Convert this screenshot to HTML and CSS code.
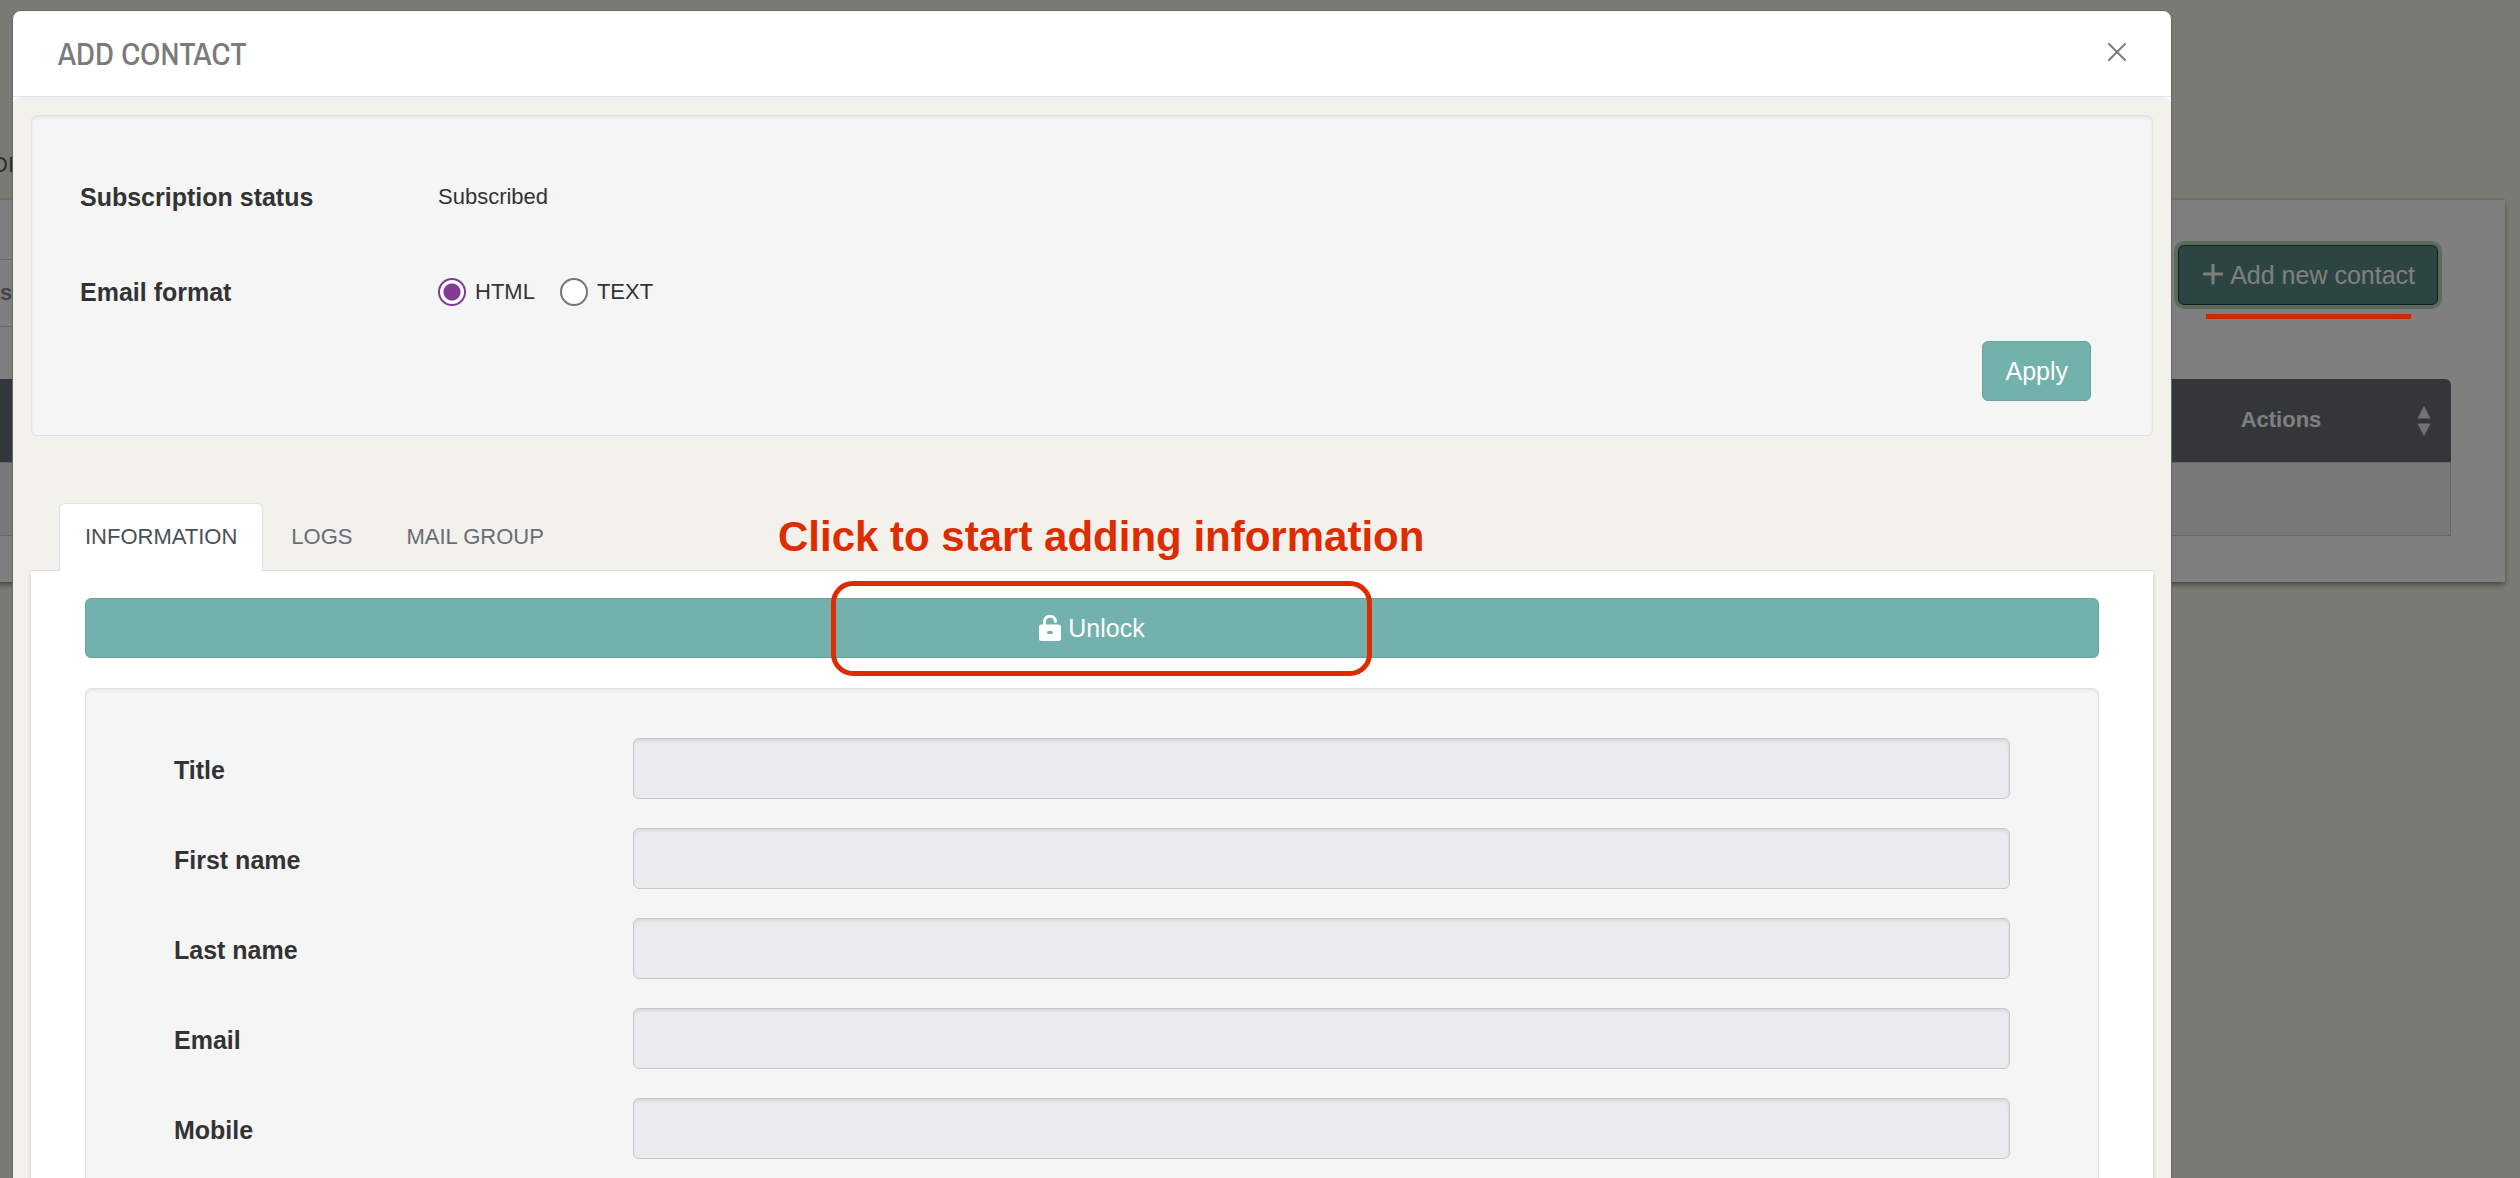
FILE: index.html
```
<!DOCTYPE html>
<html lang="en">
<head>
    <meta charset="UTF-8">
    <meta name="viewport" content="width=device-width, initial-scale=1.0">
    <title>Add Contact</title>
    <link rel="stylesheet" href="styles.css">
</head>
<body>
    <!-- Contacts page behind the modal -->
    <main class="page">
        <div class="page-tabs">DI</div>
        <div class="card">
            <div class="search-row">se</div>
            <div class="card-actions">
                <button type="button" class="btn btn-add">
                    <svg width="20" height="22" viewBox="0 0 20 22"><path d="M10 1v18M1 10h18" stroke="currentColor" stroke-width="3" stroke-linecap="round"/></svg>
                    Add new contact
                </button>
            </div>
            <table class="contacts">
                <thead>
                    <tr>
                        <th></th>
                        <th class="col-actions">
                            Actions
                            <svg class="sort" width="14" height="30" viewBox="0 0 14 30"><path d="M7 0l6.500 12.500h-13zM7 30l6.500-12.500h-13z" fill="currentColor"/></svg>
                        </th>
                    </tr>
                </thead>
                <tbody>
                    <tr>
                        <td colspan="2"></td>
                    </tr>
                </tbody>
            </table>
        </div>
    </main>

    <div class="backdrop">
        <div class="underline"></div>
        <div class="modal" role="dialog" aria-labelledby="modal-title">
            <header class="modal-header">
                <h1 id="modal-title">ADD CONTACT</h1>
                <button type="button" class="close" aria-label="Close">
                    <svg width="18" height="18" viewBox="0 0 18 18"><path d="M1 1l16 16M17 1L1 17" stroke="currentColor" stroke-width="2" stroke-linecap="round"/></svg>
                </button>
            </header>
            <div class="modal-body">
                <form class="well status-form">
                    <div class="status-row">
                        <span class="label">Subscription status</span>
                        <span class="value">Subscribed</span>
                    </div>
                    <div class="status-row">
                        <span class="label" id="format-label">Email format</span>
                        <div class="radios" role="radiogroup" aria-labelledby="format-label">
                            <label><input type="radio" name="format" checked>HTML</label>
                            <label><input type="radio" name="format">TEXT</label>
                        </div>
                    </div>
                    <button type="button" class="btn btn-apply">Apply</button>
                </form>

                <nav class="tabs">
                    <a href="#information" class="tab active">INFORMATION</a>
                    <a href="#logs" class="tab">LOGS</a>
                    <a href="#mail-group" class="tab">MAIL GROUP</a>
                    <p class="hint">Click to start adding information</p>
                </nav>

                <section class="pane" id="information">
                    <div class="unlock-wrap">
                        <button type="button" class="btn btn-unlock">
                            <svg width="22" height="26" viewBox="0 0 22 26">
                                <path d="M5.500 11V7a5.500 5.500 0 0 1 11-.6" fill="none" stroke="currentColor" stroke-width="3" stroke-linecap="round"/>
                                <path fill-rule="evenodd" d="M2.500 9.500h17a2.500 2.500 0 0 1 2.500 2.500v11.500a2.500 2.500 0 0 1-2.500 2.500h-17A2.500 2.500 0 0 1 0 23.500V12a2.500 2.500 0 0 1 2.500-2.500zM9.500 16a1.500 1.500 0 0 0 0 3h3a1.500 1.500 0 0 0 0-3z" fill="currentColor"/>
                            </svg>
                            Unlock
                        </button>
                        <div class="highlight"></div>
                    </div>
                    <form class="well contact-form">
                        <div class="field">
                            <label class="label" for="title">Title</label>
                            <input type="text" id="title" disabled>
                        </div>
                        <div class="field">
                            <label class="label" for="first-name">First name</label>
                            <input type="text" id="first-name" disabled>
                        </div>
                        <div class="field">
                            <label class="label" for="last-name">Last name</label>
                            <input type="text" id="last-name" disabled>
                        </div>
                        <div class="field">
                            <label class="label" for="email">Email</label>
                            <input type="text" id="email" disabled>
                        </div>
                        <div class="field">
                            <label class="label" for="mobile">Mobile</label>
                            <input type="text" id="mobile" disabled>
                        </div>
                    </form>
                </section>
            </div>
        </div>
    </div>
</body>
</html>
```

FILE: styles.css
```
* {
    box-sizing: border-box;
}

body {
    margin: 0;
    min-height: 100vh;
    background: #f4f4eb;
    color: #333;
    font-family: "Liberation Sans", Arial, sans-serif;
    font-size: 22px;
    line-height: 36px;
}

h1, p {
    margin: 0;
}

.btn {
    display: inline-flex;
    align-items: center;
    justify-content: center;
    gap: 7px;
    padding: 11px 22px;
    border: 1px solid #68a29d;
    border-radius: 6px;
    background: #73b1ac;
    color: #fff;
    font-family: inherit;
    font-size: 25px;
    line-height: 36px;
    cursor: pointer;
}

/* Page behind the modal */
.page {
    margin: 0 15px 0 -8px;
    padding-top: 147px;
}

.page-tabs {
    height: 52px;
    color: #4f5660;
}

.card {
    padding: 0 54px 46px 0;
    border-top: 1px solid #dcdcd8;
    background: #fff;
    box-shadow: 0 3px 5px rgba(0, 0, 0, 0.4);
}

.search-row {
    position: absolute;
    left: 0;
    top: 259px;
    width: 600px;
    padding: 15px 0;
    border-top: 1px solid #ccc;
    border-bottom: 1px solid #ccc;
    color: #8a8a8a;
    font-weight: bold;
}

.card-actions {
    display: flex;
    justify-content: flex-end;
    padding: 45px 13px 74px;
}

.btn-add {
    border-color: #243e3c;
    background: #5a8a84;
    box-shadow: 0 0 0 4px #b2d6ba;
}

.btn-add svg {
    margin-left: 2px;
}

.contacts {
    width: 100%;
    border-collapse: separate;
    border-spacing: 0;
}

.contacts th {
    position: relative;
    height: 83px;
    padding: 0 0 2px;
    background: #676d77;
    color: #fff;
}

.contacts th.col-actions {
    width: 340px;
    border-radius: 0 6px 0 0;
}

.sort {
    position: absolute;
    right: 20px;
    top: 27px;
    color: #e4e4e4;
}

.contacts td {
    height: 74px;
    padding: 0;
    border: 1px solid #ccc;
    background: #f2f2f2;
}

/* Modal */
.backdrop {
    position: fixed;
    inset: 0;
    overflow: hidden;
    padding: 10px 348px 0 12px;
    background: rgba(0, 0, 0, 0.5);
}

.modal {
    border: 1px solid #666;
    border-radius: 9px;
    background: #fff;
}

.modal-header {
    display: flex;
    justify-content: space-between;
    align-items: flex-start;
    padding: 23px 45px 22px;
    border-bottom: 1px solid #dcdfe6;
    color: #7b7b7b;
}

.modal-header h1 {
    font-family: "Archivo Narrow", Roboto, sans-serif;
    font-size: 32px;
    font-weight: 500;
    line-height: 40px;
}

.close {
    display: flex;
    align-items: center;
    height: 36px;
    padding: 0;
    border: 0;
    background: none;
    color: inherit;
    cursor: pointer;
}

.modal-body {
    padding: 18px;
    border-radius: 8px;
    background: #f3f1ec;
}

.well {
    border: 1px solid #e0e1e1;
    border-radius: 6px;
    background: #f5f5f5;
    box-shadow: inset 0 2px 3px rgba(0, 0, 0, 0.06);
}

.label {
    font-size: 25px;
    font-weight: bold;
}

.status-form {
    display: flex;
    flex-direction: column;
    gap: 59px;
    padding: 63px 61px 34px 48px;
}

.status-row {
    display: grid;
    grid-template-columns: 358px 1fr;
}

.radios {
    display: flex;
    gap: 25px;
}

.radios label {
    display: flex;
    align-items: center;
    gap: 9px;
}

.radios input {
    appearance: none;
    width: 28px;
    height: 28px;
    margin: 0;
    border: 2px solid #767676;
    border-radius: 50%;
    background: #fff;
}

.radios input:checked {
    border-color: #833c93;
    background: radial-gradient(circle, #833c93 8px, #fff 9px);
}

.btn-apply {
    align-self: flex-end;
    margin-top: -28px;
}

.tabs {
    position: relative;
    display: flex;
    gap: 2px;
    margin-top: 67px;
    padding-left: 28px;
    border-bottom: 1px solid #dadada;
}

.tab {
    margin-bottom: -1px;
    padding: 15px 25px 16px;
    border: 1px solid transparent;
    border-bottom: 0;
    border-radius: 6px 6px 0 0;
    color: #676d77;
    text-decoration: none;
}

.tab.active {
    border-color: #dee2e6;
    background: #fff;
    color: #495057;
}

.pane {
    padding: 27px 54px 54px;
    background: #fff;
    box-shadow: 0 3px 4px rgba(0, 0, 0, 0.2);
}

.unlock-wrap {
    position: relative;
}

.btn-unlock {
    width: 100%;
}

.contact-form {
    display: flex;
    flex-direction: column;
    gap: 29px;
    margin-top: 30px;
    padding: 49px 88px;
}

.field {
    display: grid;
    grid-template-columns: 1fr 3fr;
}

.field .label {
    padding-top: 14px;
}

.field input {
    width: 100%;
    height: 61px;
    padding: 11px 22px;
    border: 1px solid #c8c8c8;
    border-radius: 6px;
    background: #e9ebef;
    box-shadow: inset 0 2px 3px rgba(0, 0, 0, 0.08);
    font: inherit;
}

/* Guide marks */
.hint {
    position: absolute;
    left: 747px;
    top: 10px;
    color: #dd2c00;
    font-size: 42px;
    font-weight: bold;
    line-height: 48px;
}

.highlight {
    position: absolute;
    left: 746px;
    top: -17px;
    width: 541px;
    height: 95px;
    border: 5px solid #dd2c00;
    border-radius: 22px;
    pointer-events: none;
}

.underline {
    position: absolute;
    right: 109px;
    top: 314px;
    width: 205px;
    height: 5px;
    background: #c62b05;
}
```
